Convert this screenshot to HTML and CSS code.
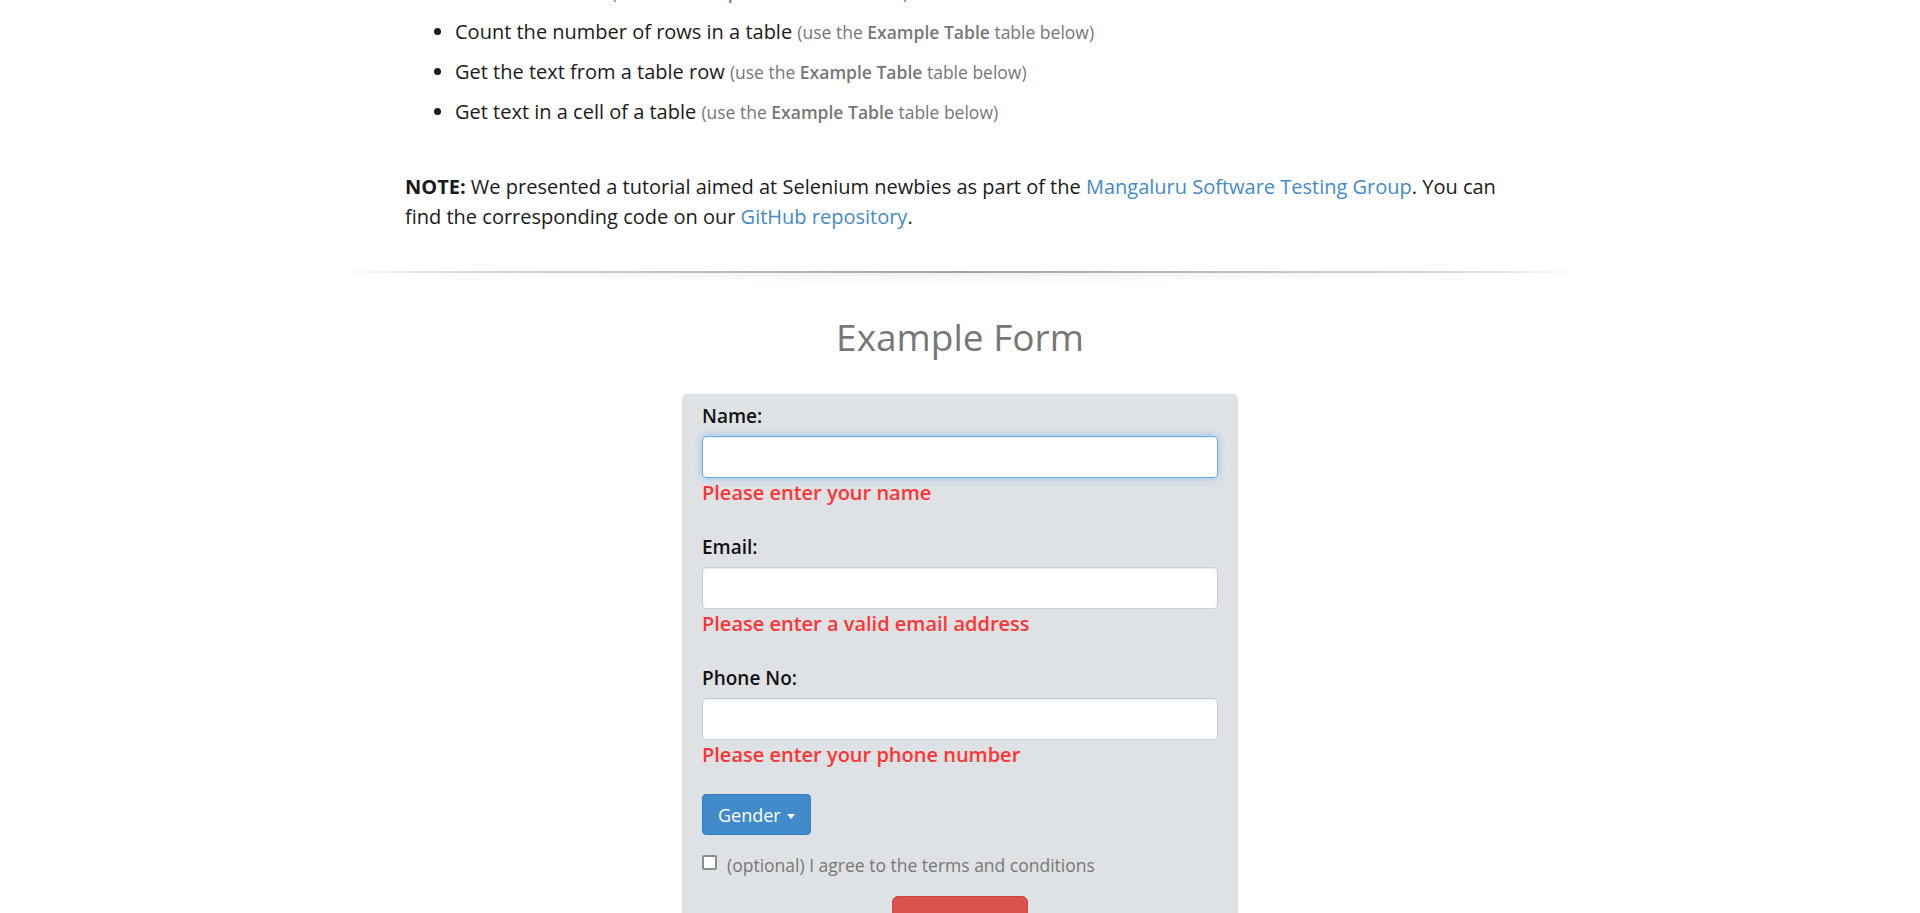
FILE: index.html
```html
<!DOCTYPE html>
<html lang="en">
<head>
<meta charset="utf-8">
<title>Selenium tutorial - Example Form</title>
<link rel="stylesheet" href="styles.css">
</head>
<body>
<div class="container">
  <ul class="tasks">
    <li>Read a table cell <small class="hint">(use the <b>Example Table</b> table below)</small></li>
    <li>Count the number of rows in a table <small class="hint">(use the <b>Example Table</b> table below)</small></li>
    <li>Get the text from a table row <small class="hint">(use the <b>Example Table</b> table below)</small></li>
    <li>Get text in a cell of a table <small class="hint">(use the <b>Example Table</b> table below)</small></li>
  </ul>
  <p class="note"><b>NOTE:</b> We presented a tutorial aimed at Selenium newbies as part of the <a href="#">Mangaluru Software Testing Group</a>. You can find the corresponding code on our <a href="#">GitHub repository</a>.</p>
</div>

<div class="divider"></div>

<h2 class="form-title">Example Form</h2>

<form class="panel">
  <div class="field">
    <label class="field-label" for="name">Name:</label>
    <input class="input is-focused" id="name" type="text">
    <div class="error">Please enter your name</div>
  </div>
  <div class="field">
    <label class="field-label" for="email">Email:</label>
    <input class="input" id="email" type="text">
    <div class="error">Please enter a valid email address</div>
  </div>
  <div class="field field-last">
    <label class="field-label" for="phone">Phone No:</label>
    <input class="input" id="phone" type="text">
    <div class="error">Please enter your phone number</div>
  </div>
  <div class="dropdown">
    <button class="btn-gender" type="button">Gender<span class="caret"></span></button>
  </div>
  <label class="agree"><input class="checkbox" type="checkbox"><span>(optional) I agree to the terms and conditions</span></label>
  <button class="btn-submit" type="button">Submit</button>
</form>
</body>
</html>
```

FILE: styles.css
```css
html {
  overflow: hidden;
}

body {
  margin: 0;
  font-family: "Open Sans", "Liberation Sans", sans-serif;
  font-size: 20px;
  line-height: 30px;
  color: #1a1a1a;
  background: #fff;
}

.container {
  width: 1110px;
  margin: 0 auto;
}

.tasks {
  margin: -28px 0 40px;
  padding-left: 50px;
}

.tasks li {
  padding: 5px 0;
}

.hint {
  font-size: 17.5px;
  line-height: 1;
  color: #777;
}

.hint b {
  font-weight: 600;
}

.note {
  margin: 0;
}

.note b {
  font-weight: 700;
}

.note a {
  color: #428bca;
  text-decoration: none;
}

.divider {
  width: 1240px;
  height: 12px;
  margin: 39px auto 0;
  background:
    linear-gradient(to right, rgba(0, 0, 0, 0) 0%, rgba(0, 0, 0, 0.12) 8%, rgba(0, 0, 0, 0.32) 50%, rgba(0, 0, 0, 0.12) 92%, rgba(0, 0, 0, 0) 100%) top center / 100% 2px no-repeat,
    radial-gradient(ellipse 50% 100% at 50% 0, rgba(0, 0, 0, 0.07), rgba(0, 0, 0, 0)) top center / 100% 12px no-repeat;
}

.form-title {
  margin: 32px 0 35px;
  font-size: 37px;
  font-weight: 400;
  line-height: 44px;
  color: #777;
  text-align: center;
}

.panel {
  width: 516px;
  margin: 0 auto;
  padding: 9px 20px 20px;
  background: #dfe2e5;
  border-radius: 5px;
}

.field {
  margin-bottom: 26px;
}

.field-last {
  margin-bottom: 24px;
}

.field-label {
  display: block;
  margin-bottom: 7px;
  font-size: 19px;
  font-weight: 600;
  line-height: 26px;
  color: #111;
}

.input {
  display: block;
  box-sizing: border-box;
  width: 100%;
  height: 42px;
  margin: 0;
  padding: 6px 12px;
  border: 1px solid #ccc;
  border-radius: 4px;
  background: #fff;
  box-shadow: inset 0 1px 1px rgba(0, 0, 0, 0.075);
  font-family: inherit;
  font-size: 18px;
}

.input.is-focused {
  border-color: #66afe9;
  outline: 0;
  box-shadow: inset 0 1px 1px rgba(0, 0, 0, 0.075), 0 0 8px rgba(102, 175, 233, 0.6);
}

.error {
  font-size: 20px;
  font-weight: 600;
  line-height: 30px;
  color: #f33;
}

.btn-gender {
  height: 41px;
  margin: 0;
  padding: 0 15px;
  font-family: inherit;
  font-size: 18px;
  color: #fff;
  background: #428bca;
  border: 1px solid #357ebd;
  border-radius: 4px;
}

.caret {
  display: inline-block;
  width: 0;
  height: 0;
  margin-left: 6px;
  vertical-align: middle;
  border-top: 5px solid #fff;
  border-left: 4.5px solid transparent;
  border-right: 4.5px solid transparent;
}

.agree {
  display: flex;
  align-items: flex-start;
  gap: 10px;
  margin-top: 17px;
  font-size: 17.5px;
  line-height: 26px;
  color: #777;
}

.checkbox {
  appearance: none;
  box-sizing: border-box;
  flex: none;
  width: 15px;
  height: 15px;
  margin: 3px 0 0;
  border: 2px solid #8b8b95;
  border-radius: 2px;
  background: #fff;
}

.btn-submit {
  display: block;
  width: 136px;
  margin: 18px auto 0;
  padding: 16px 0 10px;
  font-family: inherit;
  font-size: 18px;
  line-height: 24px;
  color: #fff;
  background: #d9534f;
  border: 1px solid #d43f3a;
  border-radius: 6px;
}
```
